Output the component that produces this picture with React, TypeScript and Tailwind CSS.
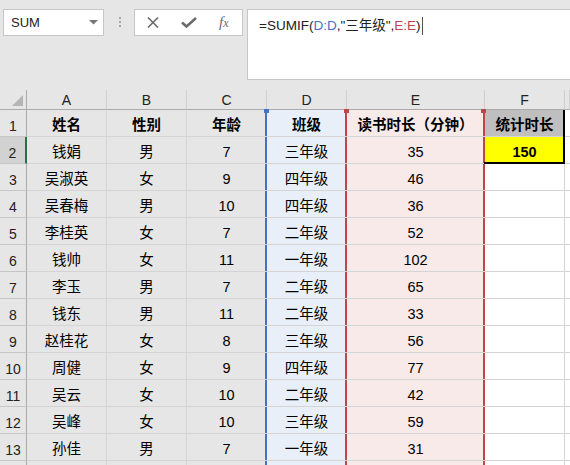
import React from "react";

const rows: [string, string, string, string, string][] = [
  ["钱娟", "男", "7", "三年级", "35"],
  ["吴淑英", "女", "9", "四年级", "46"],
  ["吴春梅", "男", "10", "四年级", "36"],
  ["李桂英", "女", "7", "二年级", "52"],
  ["钱帅", "女", "11", "一年级", "102"],
  ["李玉", "男", "7", "二年级", "65"],
  ["钱东", "男", "11", "二年级", "33"],
  ["赵桂花", "女", "8", "三年级", "56"],
  ["周健", "女", "9", "四年级", "77"],
  ["吴云", "女", "10", "二年级", "42"],
  ["吴峰", "女", "10", "三年级", "59"],
  ["孙佳", "男", "7", "一年级", "31"],
  ["", "", "", "", ""],
];

const font = { fontFamily: '"Liberation Sans", "Noto Sans CJK SC", sans-serif' };

const cellBase =
  "h-[27px] border-r border-b border-[#d4d4d4] flex items-end justify-center pb-[4px] text-[14.5px] leading-none text-black";

function RowHead({ n, active }: { n?: number; active?: boolean }) {
  return (
    <div
      className={
        active
          ? "h-[27px] border-b border-b-[#c6c6c6] border-r-2 border-r-[#217346] bg-[#d2d2d2] flex items-end justify-center pb-[3px] text-[14px] leading-none text-[#222]"
          : "h-[27px] border-b border-b-[#c6c6c6] border-r border-r-[#ababab] bg-[#e6e6e6] flex items-end justify-center pb-[3px] text-[14px] leading-none text-[#222]"
      }
    >
      {n}
    </div>
  );
}

function DCell({ children, bold, first }: { children?: React.ReactNode; bold?: boolean; first?: boolean }) {
  return (
    <div className={`${cellBase} relative bg-[#e9eff9] ${bold ? "font-bold" : ""}`}>
      <span className="absolute -left-[2px] top-0 bottom-0 w-[2px] bg-[#4472c4] z-10" />
      {first && <span className="absolute -left-[3px] -top-[1px] w-[5px] h-[4px] bg-[#4472c4] z-20" />}
      {children}
    </div>
  );
}

function ECell({ children, bold, first }: { children?: React.ReactNode; bold?: boolean; first?: boolean }) {
  return (
    <div className={`${cellBase} relative bg-[#f9eaea] ${bold ? "font-bold" : ""}`}>
      <span className="absolute -left-[2px] top-0 bottom-0 w-[2px] bg-[#c0454a] z-10" />
      <span className="absolute -right-[1px] top-0 bottom-0 w-[2px] bg-[#c0454a] z-10" />
      {first && <span className="absolute -left-[3px] -top-[1px] w-[5px] h-[4px] bg-[#c0454a] z-20" />}
      {first && <span className="absolute -right-[2px] -top-[1px] w-[5px] h-[4px] bg-[#c0454a] z-20" />}
      {children}
    </div>
  );
}

function Cell({ children, bold }: { children?: React.ReactNode; bold?: boolean }) {
  return <div className={`${cellBase} ${bold ? "font-bold" : ""}`}>{children}</div>;
}

export default function App() {
  return (
    <div className="w-[570px] h-[465px] overflow-hidden bg-[#e6e6e6] select-none" style={font}>
      {/* Toolbar / formula bar */}
      <div className="flex items-start h-[90px]">
        <div className="ml-[3px] mt-[9px] w-[101px] h-[27px] bg-white border border-[#c6c6c6] flex items-center justify-between pl-[7px] pr-[5px]">
          <span className="text-[13px] text-[#222] leading-none">SUM</span>
          <svg width="9" height="5" viewBox="0 0 9 5">
            <path d="M0 0 L9 0 L4.5 4.5 Z" fill="#777" />
          </svg>
        </div>
        <div className="ml-[15px] mt-[17px] flex flex-col gap-[2px]">
          <span className="w-[2px] h-[2px] bg-[#a8a8a8]" />
          <span className="w-[2px] h-[2px] bg-[#a8a8a8]" />
          <span className="w-[2px] h-[2px] bg-[#a8a8a8]" />
        </div>
        <div className="ml-[13px] mt-[9px] w-[109px] h-[27px] bg-white border border-[#c6c6c6] flex items-center pl-[12px]">
          <svg width="12" height="11" viewBox="0 0 12 11">
            <path d="M1 0.5 L11 10.5 M11 0.5 L1 10.5" stroke="#6b6b6b" strokeWidth="1.6" fill="none" />
          </svg>
          <svg className="ml-[22px]" width="16" height="11" viewBox="0 0 16 11">
            <path d="M1 5.5 L5.5 9.5 L15 1" stroke="#6b6b6b" strokeWidth="2.6" fill="none" />
          </svg>
          <span
            className="ml-[22px] text-[15px] italic leading-none text-[#6b6b6b]"
            style={{ fontFamily: '"Liberation Serif", serif' }}
          >
            f<span className="text-[12px]">x</span>
          </span>
        </div>
        <div className="ml-[4px] mt-[9px] flex-1 h-[71px] bg-white border border-r-0 border-[#c6c6c6] pl-[11px] pt-[6px]">
          <div className="flex items-center text-[13.5px] leading-[20px] text-[#222]">
            <span>=SUMIF(</span>
            <span className="text-[#4472c4]">D:D</span>
            <span>,"三年级",</span>
            <span className="text-[#c0454a]">E:E</span>
            <span>)</span>
            <span className="ml-[1px] w-[1px] h-[18px] bg-[#555]" />
          </div>
        </div>
      </div>

      {/* Sheet */}
      <div className="grid grid-cols-[27px_80px_80px_80px_80px_138px_80px_1fr]">
        {/* Column headers */}
        <div className="h-[20px] border-r border-b border-r-[#ababab] border-b-[#ababab] bg-[#e6e6e6] flex items-end justify-end pr-[3px] pb-[3px]">
          <svg width="11" height="11" viewBox="0 0 11 11">
            <path d="M11 0 L11 11 L0 11 Z" fill="#b5b5b5" />
          </svg>
        </div>
        {["A", "B", "C", "D", "E", "F", ""].map((c, i) => (
          <div
            key={i}
            className="h-[20px] border-r border-b border-r-[#cfcfcf] border-b-[#ababab] bg-[#e6e6e6] flex items-end justify-center pb-[2px] text-[14px] leading-none text-[#222]"
          >
            {c}
          </div>
        ))}

        {/* Row 1 */}
        <RowHead n={1} />
        <Cell bold>姓名</Cell>
        <Cell bold>性别</Cell>
        <Cell bold>年龄</Cell>
        <DCell bold first>
          班级
        </DCell>
        <ECell bold first>
          读书时长（分钟）
        </ECell>
        <div className={`${cellBase} relative bg-[#bfbfbf] font-bold`}>
          <span className="absolute -right-[1px] top-0 bottom-0 w-[2px] bg-black z-10" />
          统计时长
        </div>
        <div className="h-[27px] border-b border-[#d4d4d4] bg-white" />

        {rows.map((r, idx) => {
          const n = idx + 2;
          return (
            <React.Fragment key={n}>
              <RowHead n={n <= 13 ? n : undefined} active={n === 2} />
              <Cell>{r[0]}</Cell>
              <Cell>{r[1]}</Cell>
              <Cell>{r[2]}</Cell>
              <DCell>{r[3]}</DCell>
              <ECell>{r[4]}</ECell>
              {n === 2 ? (
                <div className={`${cellBase} relative bg-[#ffff00] font-bold`}>
                  <span className="absolute -right-[1px] -top-[1px] -bottom-[1px] w-[2px] bg-black z-10" />
                  <span className="absolute -left-[1px] -right-[1px] -bottom-[1px] h-[2px] bg-black z-10" />
                  150
                </div>
              ) : (
                <div className={`${cellBase} bg-white`} />
              )}
              <div className="h-[27px] border-b border-[#d4d4d4] bg-white" />
            </React.Fragment>
          );
        })}
      </div>
    </div>
  );
}
